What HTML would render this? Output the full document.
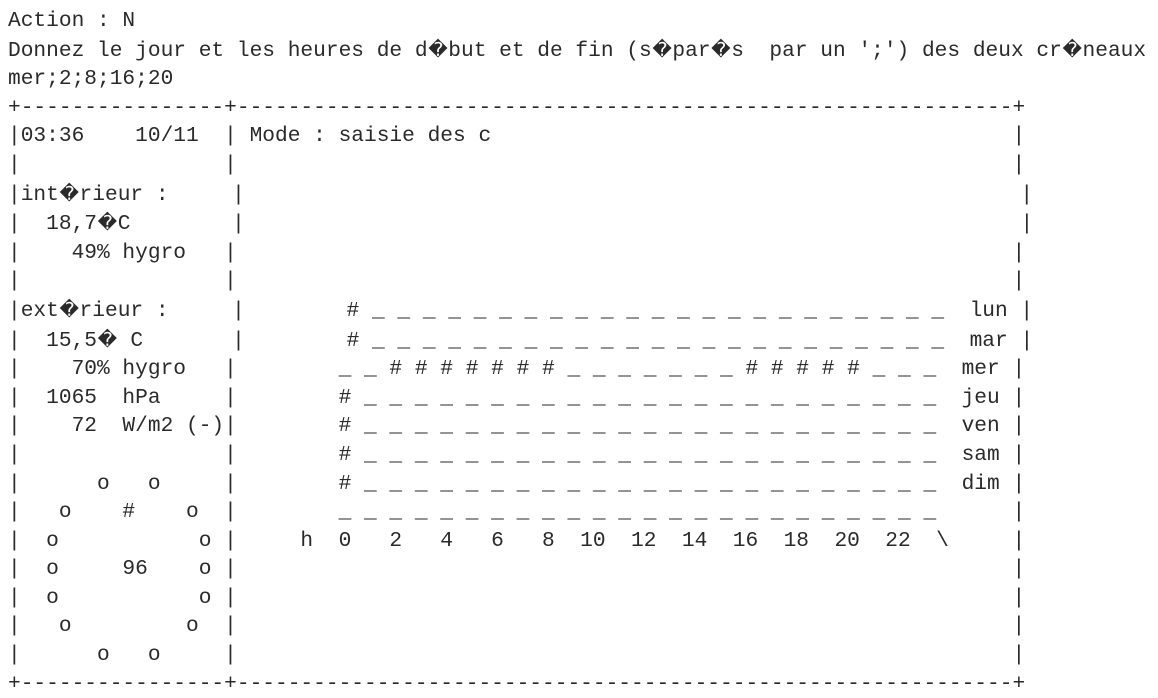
<!DOCTYPE html>
<html><head><meta charset="utf-8"><style>
html,body{margin:0;padding:0;background:#fff;width:1158px;height:698px;overflow:hidden}
pre{position:absolute;left:8px;top:7px;margin:0;font-family:"Liberation Mono","DejaVu Sans Mono",monospace;font-size:21.2px;line-height:28.6px;color:#2a2a2a;white-space:pre}
.q{display:inline-block;width:20.7px;text-align:center;font-family:"DejaVu Sans",sans-serif;font-size:19px}
</style></head><body>
<pre>Action : N
Donnez le jour et les heures de d<span class="q">�</span>but et de fin (s<span class="q">�</span>par<span class="q">�</span>s  par un ';') des deux cr<span class="q">�</span>neaux
mer;2;8;16;20
+----------------+-------------------------------------------------------------+
|03:36    10/11  | Mode : saisie des c                                         |
|                |                                                             |
|int<span class="q">�</span>rieur :     |                                                             |
|  18,7<span class="q">�</span>C        |                                                             |
|    49% hygro   |                                                             |
|                |                                                             |
|ext<span class="q">�</span>rieur :     |        # _ _ _ _ _ _ _ _ _ _ _ _ _ _ _ _ _ _ _ _ _ _ _  lun |
|  15,5<span class="q">�</span> C       |        # _ _ _ _ _ _ _ _ _ _ _ _ _ _ _ _ _ _ _ _ _ _ _  mar |
|    70% hygro   |        _ _ # # # # # # # _ _ _ _ _ _ _ # # # # # _ _ _  mer |
|  1065  hPa     |        # _ _ _ _ _ _ _ _ _ _ _ _ _ _ _ _ _ _ _ _ _ _ _  jeu |
|    72  W/m2 (-)|        # _ _ _ _ _ _ _ _ _ _ _ _ _ _ _ _ _ _ _ _ _ _ _  ven |
|                |        # _ _ _ _ _ _ _ _ _ _ _ _ _ _ _ _ _ _ _ _ _ _ _  sam |
|      o   o     |        # _ _ _ _ _ _ _ _ _ _ _ _ _ _ _ _ _ _ _ _ _ _ _  dim |
|   o    #    o  |        _ _ _ _ _ _ _ _ _ _ _ _ _ _ _ _ _ _ _ _ _ _ _ _      |
|  o           o |     h  0   2   4   6   8  10  12  14  16  18  20  22  \     |
|  o     96    o |                                                             |
|  o           o |                                                             |
|   o         o  |                                                             |
|      o   o     |                                                             |
+----------------+-------------------------------------------------------------+</pre>
</body></html>
